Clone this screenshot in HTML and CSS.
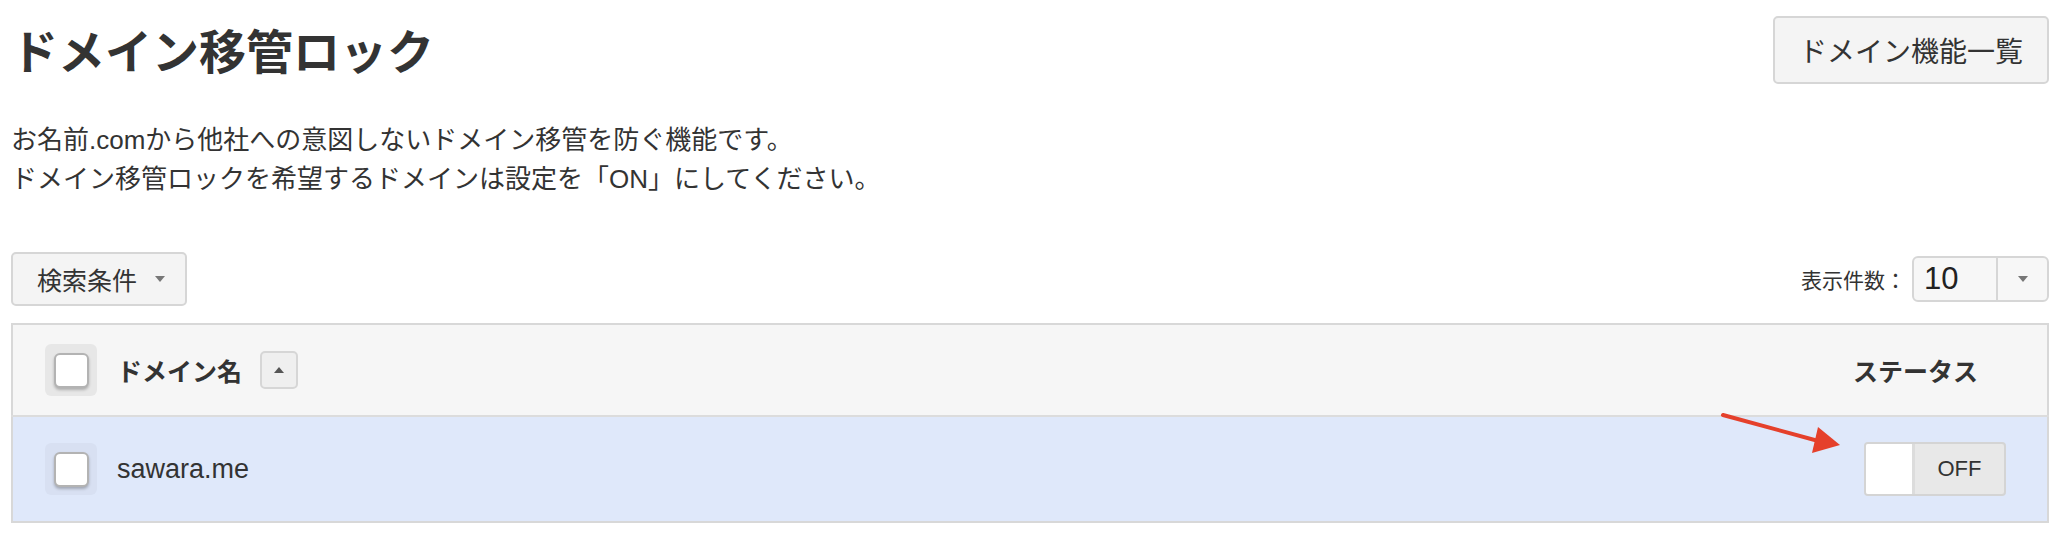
FILE: index.html
```html
<!DOCTYPE html>
<html lang="ja">
<head>
    <meta charset="UTF-8">
    <meta name="viewport" content="width=device-width, initial-scale=1.0">
    <title>ドメイン移管ロック</title>
    <link rel="stylesheet" href="styles.css">
</head>
<body>
    <div class="page">
        <div class="page-head">
            <h1 class="page-title">ドメイン移管ロック</h1>
            <button class="btn btn-list">ドメイン機能一覧</button>
        </div>

        <p class="lead">
            お名前.comから他社への意図しないドメイン移管を防ぐ機能です。<br>
            ドメイン移管ロックを希望するドメインは設定を「ON」にしてください。
        </p>

        <div class="toolbar">
            <button class="btn btn-filter">検索条件<span class="caret"></span></button>
            <div class="per-page">
                <span class="per-page-label">表示件数：</span>
                <div class="select">
                    <span class="select-value">10</span>
                    <span class="select-arrow"><span class="caret"></span></span>
                </div>
            </div>
        </div>

        <table class="domains">
            <thead>
                <tr>
                    <th class="col-name">
                        <div class="cell-name">
                            <span class="check-wrap"><span class="check"></span></span>
                            <span class="th-label">ドメイン名</span>
                            <span class="sort"><span class="caret-up"></span></span>
                        </div>
                    </th>
                    <th class="col-status">ステータス</th>
                </tr>
            </thead>
            <tbody>
                <tr class="selected">
                    <td class="col-name">
                        <div class="cell-name">
                            <span class="check-wrap"><span class="check"></span></span>
                            <span class="domain">sawara.me</span>
                        </div>
                    </td>
                    <td class="col-status">
                        <span class="toggle">
                            <span class="toggle-knob"></span>
                            <span class="toggle-label">OFF</span>
                        </span>
                    </td>
                </tr>
            </tbody>
        </table>

        <!-- annotation arrow -->
        <svg class="pointer" width="135" height="55" viewBox="1715 405 135 55">
            <line x1="1723" y1="415" x2="1822" y2="442" stroke="#e5402b" stroke-width="4" stroke-linecap="round"/>
            <polygon points="1818,427 1840,445 1812,453" fill="#e5402b"/>
        </svg>
    </div>
</body>
</html>
```

FILE: styles.css
```css
body {
    margin: 0;
    padding: 0;
    background: #fff;
    color: #333;
    font-family: "Liberation Sans", "Noto Sans CJK JP", sans-serif;
}

.page {
    position: relative;
    padding: 16px 17px 0 11px;
}

.page-head {
    display: flex;
    justify-content: space-between;
    align-items: flex-start;
}

.page-title {
    margin: 7px 0 0;
    font-size: 47px;
    line-height: 60px;
    font-weight: bold;
    color: #333;
}

.btn {
    background: #f4f4f4;
    border: 2px solid #d6d6d6;
    border-radius: 5px;
    color: #333;
    font-family: inherit;
    cursor: pointer;
}

.btn-list {
    box-sizing: border-box;
    width: 276px;
    height: 68px;
    padding: 0;
    font-size: 28px;
    text-align: center;
}

.lead {
    margin: 37px 0 0;
    font-size: 26px;
    line-height: 39px;
}

.toolbar {
    display: flex;
    justify-content: space-between;
    align-items: center;
    margin-top: 53px;
}

.btn-filter {
    display: flex;
    align-items: center;
    gap: 18px;
    width: 176px;
    height: 54px;
    padding: 0 0 0 24px;
    font-size: 25px;
}

.caret {
    display: inline-block;
    width: 0;
    height: 0;
    border-left: 5px solid transparent;
    border-right: 5px solid transparent;
    border-top: 6px solid #777;
}

.per-page {
    display: flex;
    align-items: center;
    gap: 6px;
}

.per-page-label {
    font-size: 21px;
}

.select {
    display: flex;
    box-sizing: border-box;
    width: 137px;
    height: 46px;
    border: 2px solid #d6d6d6;
    border-radius: 6px;
    background: #f7f7f7;
}

.select-value {
    width: 72px;
    padding-left: 10px;
    border-right: 2px solid #d6d6d6;
    font-size: 31px;
    line-height: 42px;
    color: #222;
}

.select-arrow {
    flex: 1;
    display: flex;
    align-items: center;
    justify-content: center;
}

.domains {
    width: 100%;
    margin-top: 17px;
    border-collapse: collapse;
    border: 2px solid #d8d8d8;
}

.domains th {
    height: 90px;
    padding: 0;
    background: #f6f6f6;
    border-bottom: 2px solid #dcdcdc;
    font-size: 25px;
    font-weight: bold;
    text-align: left;
}

.domains td {
    height: 104px;
    padding: 0;
    font-size: 27px;
}

.selected td {
    background: #dfe8fa;
}

.cell-name {
    display: flex;
    align-items: center;
    padding-left: 32px;
}

.check-wrap {
    display: flex;
    align-items: center;
    justify-content: center;
    width: 52px;
    height: 52px;
    border-radius: 6px;
    background: rgba(0, 0, 0, 0.06);
    margin-right: 20px;
}

.selected .check-wrap {
    background: rgba(0, 0, 0, 0.03);
}

.check {
    box-sizing: border-box;
    width: 35px;
    height: 35px;
    background: #fff;
    border: 2px solid #b3b3b3;
    border-radius: 6px;
    box-shadow: 0 2px 3px rgba(0, 0, 0, 0.25);
}

.th-label {
    margin-right: 18px;
}

.sort {
    display: flex;
    align-items: center;
    justify-content: center;
    box-sizing: border-box;
    width: 38px;
    height: 38px;
    background: #efefef;
    border: 2px solid #d6d6d6;
    border-radius: 5px;
}

.caret-up {
    width: 0;
    height: 0;
    border-left: 5px solid transparent;
    border-right: 5px solid transparent;
    border-bottom: 6px solid #555;
}

.domain {
    color: #333;
}

.domains th.col-status {
    text-align: right;
    padding-right: 69px;
}

.domains td.col-status {
    text-align: right;
    padding-right: 41px;
}

.toggle {
    display: inline-flex;
    vertical-align: middle;
    box-sizing: border-box;
    width: 142px;
    height: 54px;
    border: 2px solid #d4d4d4;
    border-radius: 4px;
    background: #e8e8e8;
    overflow: hidden;
}

.toggle-knob {
    width: 46px;
    background: #fff;
    border-right: 3px solid #dcdcdc;
}

.toggle-label {
    flex: 1;
    display: flex;
    align-items: center;
    justify-content: center;
    font-size: 22px;
    color: #333;
}

.pointer {
    position: absolute;
    left: 1715px;
    top: 405px;
}
```
